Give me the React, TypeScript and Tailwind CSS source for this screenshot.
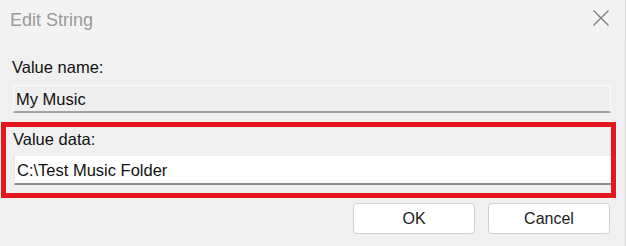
export default function App() {
  return (
    <div className="h-[246px] w-[626px] overflow-hidden border-r border-[#d9d9d9] bg-[#f0f0f0] font-['Liberation_Sans',Arial,sans-serif] text-[#111]">
      {/* title bar */}
      <div className="flex h-[40px] items-center justify-between bg-[#f3f3f3] pl-[10px] pr-[16px]">
        <span className="text-[18px] leading-[22px] text-[#9a9a9a]">Edit String</span>
        <svg width="16" height="16" viewBox="0 0 16 16" className="mb-[4px]" aria-hidden>
          <path d="M0.5 0.5 L15.5 15.5 M15.5 0.5 L0.5 15.5" stroke="#7c7c7c" strokeWidth="1.3" fill="none" />
        </svg>
      </div>

      <div className="pt-[17px]">
        <div className="pl-[12px] text-[16.5px] leading-[20px]">Value name:</div>
        <div className="ml-[13px] mt-[8px] flex h-[28px] w-[598px] items-center border border-b-2 border-[#fbfbfb] border-b-[#a3a3a3] bg-[#efefef] pl-[2px] text-[16.5px] leading-[20px]">
          My Music
        </div>

        <div className="ml-[1px] mt-[9px] w-[615px] border-[5px] border-[#e5161d] pb-[8px] pt-[2px]">
          <div className="pl-[7px] text-[16.5px] leading-[20px]">Value data:</div>
          <div className="ml-[8px] mt-[7px] flex h-[29px] items-center border-b-2 border-l border-[#8c8c8c] border-l-[#e6e6e6] bg-white pl-[2px] text-[16.5px] leading-[20px]">
            C:\Test Music Folder
          </div>
        </div>

        <div className="mt-[5px] flex justify-end gap-[13px] pr-[15px]">
          <button className="h-[31px] w-[122px] rounded-[4px] border border-[#d0d0d0] bg-white text-[16px] text-[#1b1b1b]">
            OK
          </button>
          <button className="h-[31px] w-[122px] rounded-[4px] border border-[#d0d0d0] bg-white text-[16px] text-[#1b1b1b]">
            Cancel
          </button>
        </div>
      </div>
    </div>
  );
}
